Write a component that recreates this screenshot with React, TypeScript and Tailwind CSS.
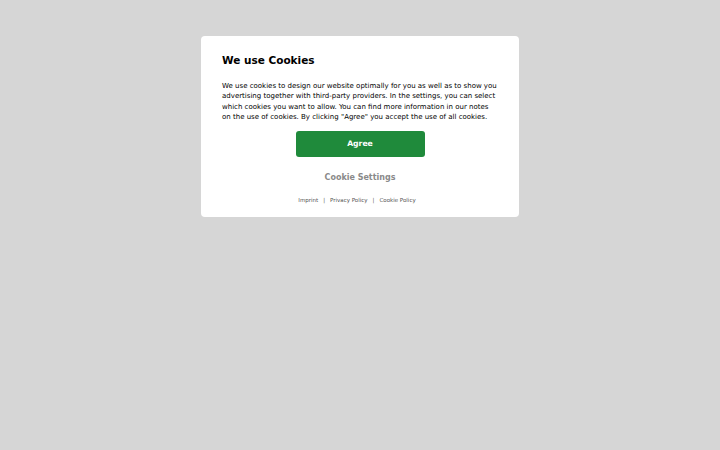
export default function App() {
  return (
    <div className="w-[720px] h-[450px] bg-[#d6d6d6] flex justify-center items-start pt-[36px]" style={{ fontFamily: '"DejaVu Sans", sans-serif' }}>
      <div className="w-[318px] bg-white rounded-[4px] px-[20px] pt-[16px] pb-[13px] flex flex-col">
        <h1 className="pl-[1px] text-[10.5px] font-bold text-black leading-[16px]">We use Cookies</h1>
        <p className="mt-[13px] pl-[1px] text-[7px] leading-[10.4px] text-black">
          We use cookies to design our website optimally for you as well as to show you advertising together with third-party providers. In the settings, you can select which cookies you want to allow. You can find more information in our notes on the use of cookies. By clicking "Agree" you accept the use of all cookies.
        </p>
        <button className="self-center mt-[8px] w-[129px] h-[26px] rounded-[3px] bg-[#1f8a3b] text-white text-[7.7px] font-bold">
          Agree
        </button>
        <button className="self-center mt-[15px] text-[8px] font-bold text-[#8a8a8a]">Cookie Settings</button>
        <div className="mt-[12px] pr-[6px] flex justify-center items-center gap-[5px] text-[5.5px] text-[#555]">
          <span>Imprint</span>
          <span>|</span>
          <span>Privacy Policy</span>
          <span>|</span>
          <span>Cookie Policy</span>
        </div>
      </div>
    </div>
  )
}
